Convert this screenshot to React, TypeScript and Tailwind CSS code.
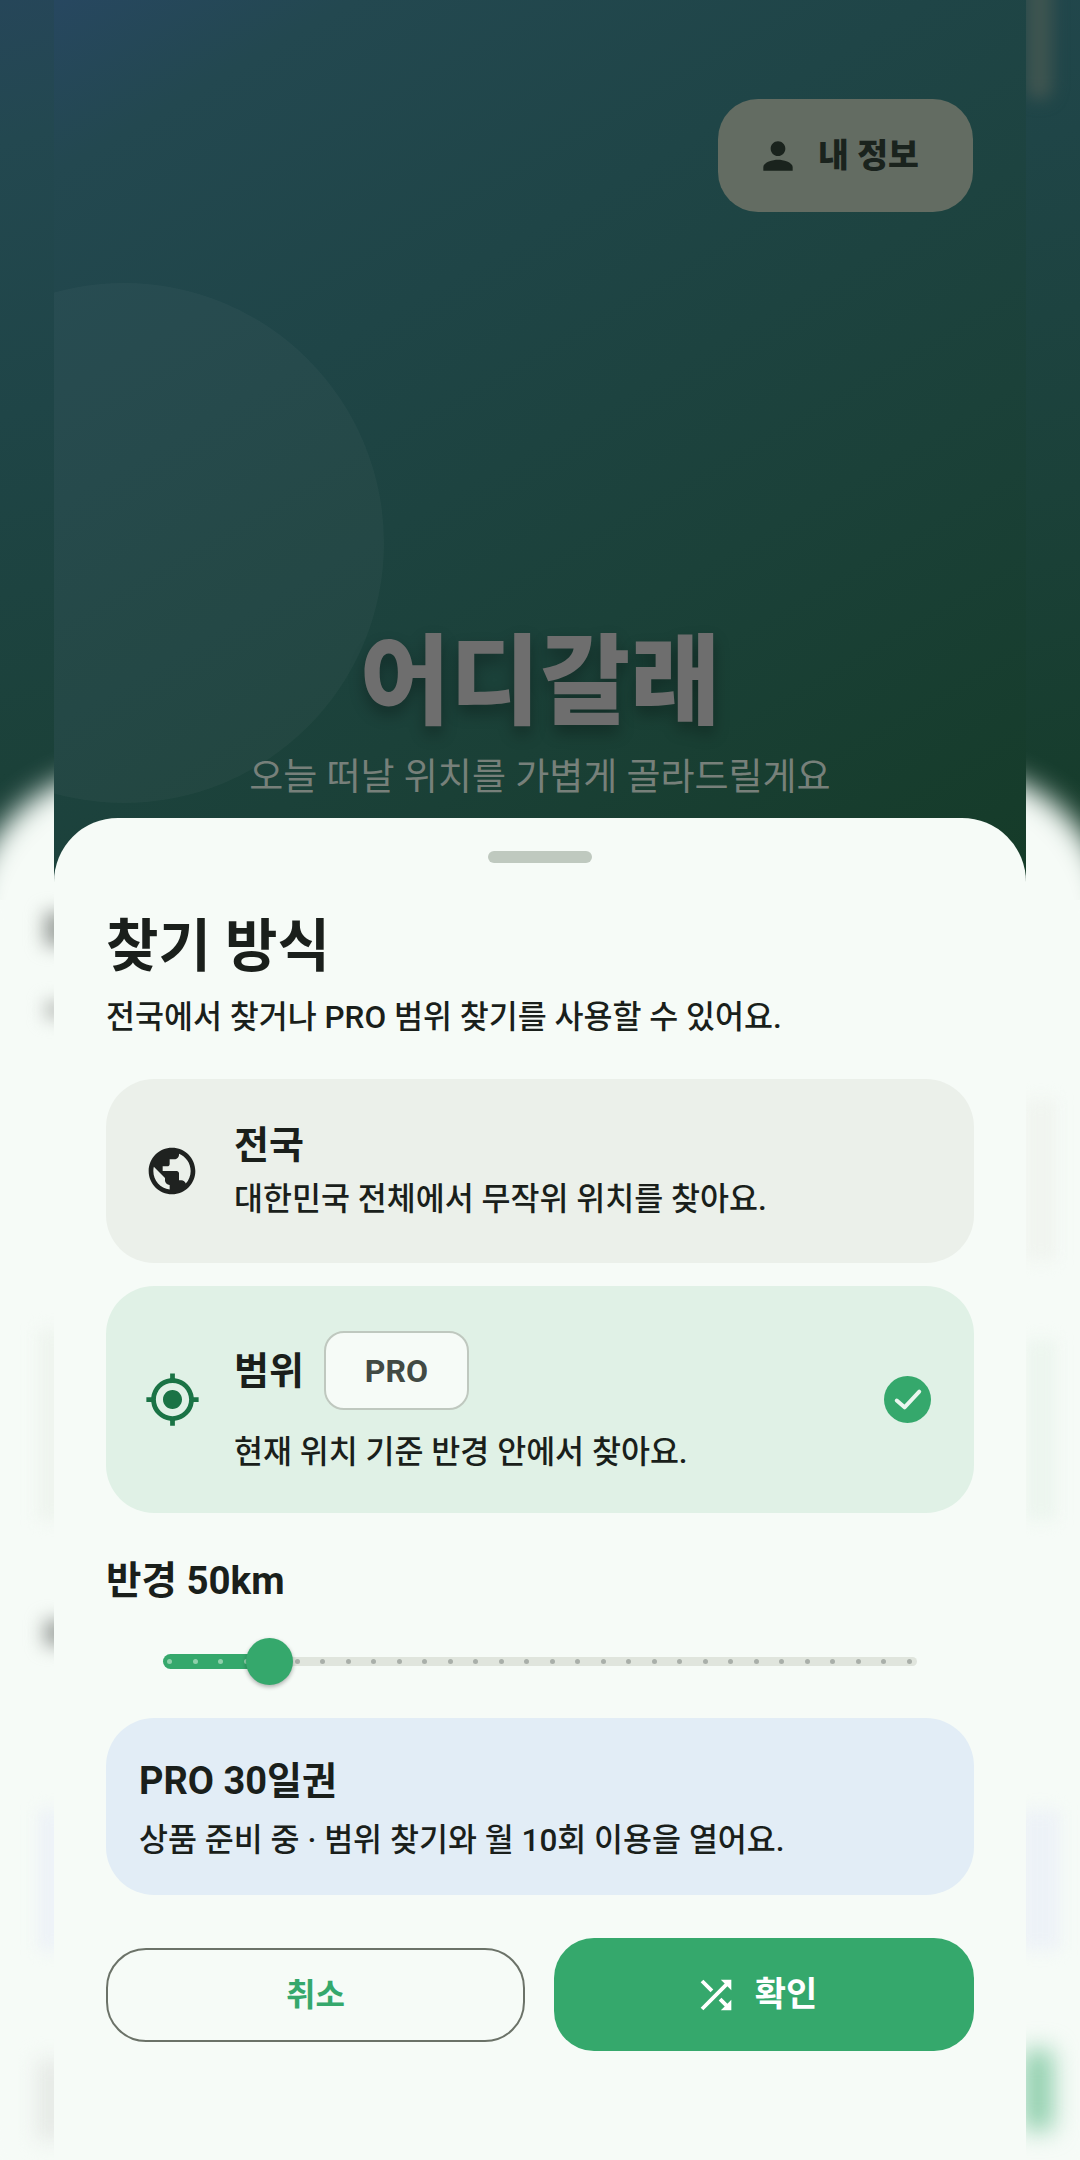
import { MdMyLocation, MdPerson, MdPublic, MdShuffle } from "react-icons/md";

const ticks = Array.from({ length: 30 }, (_, i) => i);
const activeTicks = 4;

function Backdrop() {
  return (
    <div className="absolute inset-0 overflow-hidden bg-[#f6fbf7]">
      {/* blurred, slightly larger copy of the app peeking out at the sides */}
      <div className="absolute left-0 top-0 h-[900px] w-full bg-[linear-gradient(165deg,#264659_0%,#234850_12%,#1f4547_35%,#1b4139_65%,#153b28_100%)]" />
      <div className="absolute right-[28px] -top-[30px] h-[130px] w-[26px] rounded-[20px] bg-[#3f5550] blur-[8px]" />
      <div className="absolute -left-[30px] top-[770px] h-[1500px] w-[1140px] rounded-[150px] bg-[#f6fbf7] blur-[14px]" />
      <div className="absolute left-[44px] top-[912px] h-[34px] w-[30px] bg-[#9ea39f] blur-[9px]" />
      <div className="absolute left-[44px] top-[1000px] h-[20px] w-[30px] bg-[#c6cac6] blur-[8px]" />
      <div className="absolute left-[38px] top-[1330px] h-[190px] w-[30px] bg-[#eef4ee] blur-[8px]" />
      <div className="absolute left-[44px] top-[1620px] h-[26px] w-[30px] bg-[#9ea39f] blur-[9px]" />
      <div className="absolute left-[38px] top-[1810px] h-[140px] w-[30px] bg-[#edf2f7] blur-[8px]" />
      <div className="absolute left-[36px] top-[2060px] h-[80px] w-[30px] bg-[#e6eae6] blur-[10px]" />
      <div className="absolute right-[24px] top-[1100px] h-[160px] w-[30px] bg-[#f0f4ef] blur-[8px]" />
      <div className="absolute right-[24px] top-[1340px] h-[180px] w-[30px] bg-[#ecf5ee] blur-[8px]" />
      <div className="absolute right-[20px] top-[1810px] h-[140px] w-[40px] bg-[#edf2f7] blur-[8px]" />
      <div className="absolute right-[28px] top-[2050px] h-[80px] w-[28px] bg-[#86cba6] blur-[12px]" />
    </div>
  );
}

function Hero() {
  return (
    <div className="relative flex h-[882px] flex-col items-center overflow-hidden bg-[linear-gradient(150deg,#274760_0%,#234850_12%,#1f4547_35%,#1b4139_65%,#153b28_100%)]">
      <div className="absolute -left-[190px] top-[283px] h-[520px] w-[520px] rounded-full bg-white/[0.03]" />
      <div className="relative flex w-full justify-end pr-[53px] pt-[99px]">
        <div className="flex h-[113px] w-[255px] items-center gap-[18px] rounded-[40px] bg-[#636c62] pl-[38px] text-[#1a231d]">
          <MdPerson size={44} />
          <span className="text-[33.5px] font-black leading-none">내 정보</span>
        </div>
      </div>
      <h1 className="relative mt-[411px] text-[98px] font-black leading-[120px] text-[#6e6e6e] [text-shadow:0_8px_16px_rgba(0,0,0,0.3)]">
        어디갈래
      </h1>
      <p className="relative mt-[11px] text-[37px] leading-[48px] text-[#77807a]">
        오늘 떠날 위치를 가볍게 골라드릴게요
      </p>
    </div>
  );
}

function RadiusSlider() {
  return (
    <div className="relative ml-[57px] mt-[32px] flex h-[47px] w-[754px] items-center">
      <div className="h-[9px] w-full rounded-full bg-[#e0e5dd]" />
      <div className="absolute left-0 h-[15px] w-[107px] rounded-l-full bg-[#35a86c]" />
      <div className="absolute left-[4px] right-[5px] flex justify-between">
        {ticks.map((t) => (
          <span
            key={t}
            className={
              t < activeTicks
                ? "h-[5px] w-[5px] rounded-full bg-[#8fd0ab]"
                : "h-[5px] w-[5px] rounded-full bg-[#a9afa9]"
            }
          />
        ))}
      </div>
      <div className="absolute left-[83px] h-[47px] w-[47px] rounded-full bg-[#35a86c] shadow-[0_2px_4px_rgba(0,0,0,0.3)]" />
    </div>
  );
}

function Sheet() {
  return (
    <div className="relative -mt-[64px] flex h-[1342px] flex-col rounded-t-[64px] bg-[#f6fbf7] px-[52px]">
      <div className="mx-auto mt-[33px] h-[12px] w-[104px] rounded-full bg-[#bfc9bf]" />
      <h2 className="mt-[48px] text-[57px] font-bold leading-[72px] text-[#1a1f1b]">찾기 방식</h2>
      <p className="mt-[13px] text-[31.5px] font-medium leading-[44px] text-[#1a1f1b]">
        전국에서 찾거나 PRO 범위 찾기를 사용할 수 있어요.
      </p>

      <div className="mt-[39px] flex h-[184px] items-center rounded-[48px] bg-[#ebf0ea] pl-[38px]">
        <MdPublic size={56} className="text-[#1f2220]" />
        <div className="ml-[34px]">
          <div className="text-[38px] font-bold leading-[50px] text-[#1a1f1b]">전국</div>
          <div className="mt-[8px] text-[31.5px] font-medium leading-[44px] text-[#1a1f1b]">
            대한민국 전체에서 무작위 위치를 찾아요.
          </div>
        </div>
      </div>

      <div className="mt-[23px] flex h-[227px] items-center rounded-[48px] bg-[#e0f1e6] pl-[38px] pr-[43px]">
        <MdMyLocation size={57} className="text-[#1a7345]" />
        <div className="ml-[33px] flex-1 pt-[7px]">
          <div className="flex items-center gap-[20px]">
            <span className="text-[38px] font-bold leading-[50px] text-[#1a1f1b]">범위</span>
            <span className="flex h-[79px] w-[145px] items-center justify-center rounded-[20px] border-2 border-[#bfc8bf] bg-[#f6fbf7] text-[32px] font-bold text-[#424a44]">
              PRO
            </span>
          </div>
          <div className="mt-[21px] text-[31.5px] font-medium leading-[44px] text-[#1a1f1b]">
            현재 위치 기준 반경 안에서 찾아요.
          </div>
        </div>
        <svg viewBox="0 0 48 48" className="h-[47px] w-[47px]">
          <circle cx="24" cy="24" r="24" fill="#35a86c" />
          <path d="M13 25l8 7 15-16" fill="none" stroke="#eaf6ef" strokeWidth="4" strokeLinecap="round" strokeLinejoin="round" />
        </svg>
      </div>

      <div className="mt-[43px] text-[38.5px] font-bold leading-[50px] text-[#1a1f1b]">반경 50km</div>
      <RadiusSlider />

      <div className="mt-[33px] flex h-[177px] flex-col justify-center rounded-[48px] bg-[#e2edf6] px-[33px] pt-[5px]">
        <div className="text-[38px] font-bold leading-[50px] text-[#1a1f1b]">PRO 30일권</div>
        <div className="mt-[13px] text-[31.5px] font-medium leading-[44px] text-[#1a1f1b]">
          상품 준비 중 · 범위 찾기와 월 10회 이용을 열어요.
        </div>
      </div>

      <div className="mt-[43px] flex items-center gap-[29px]">
        <button className="h-[94px] w-[419px] rounded-[40px] border-2 border-[#6b7268] text-[32px] font-bold text-[#35a86c]">
          취소
        </button>
        <button className="flex h-[113px] w-[420px] items-center justify-center gap-[16px] rounded-[40px] bg-[#35a86c] pr-[18px] text-[34px] font-bold text-white">
          <MdShuffle size={46} />
          확인
        </button>
      </div>
    </div>
  );
}

export default function App() {
  return (
    <div className="relative h-[2160px] w-[1080px] overflow-hidden font-[Roboto,'Noto_Sans_CJK_KR',sans-serif]">
      <Backdrop />
      <div className="relative mx-[54px]">
        <Hero />
        <Sheet />
      </div>
    </div>
  );
}
